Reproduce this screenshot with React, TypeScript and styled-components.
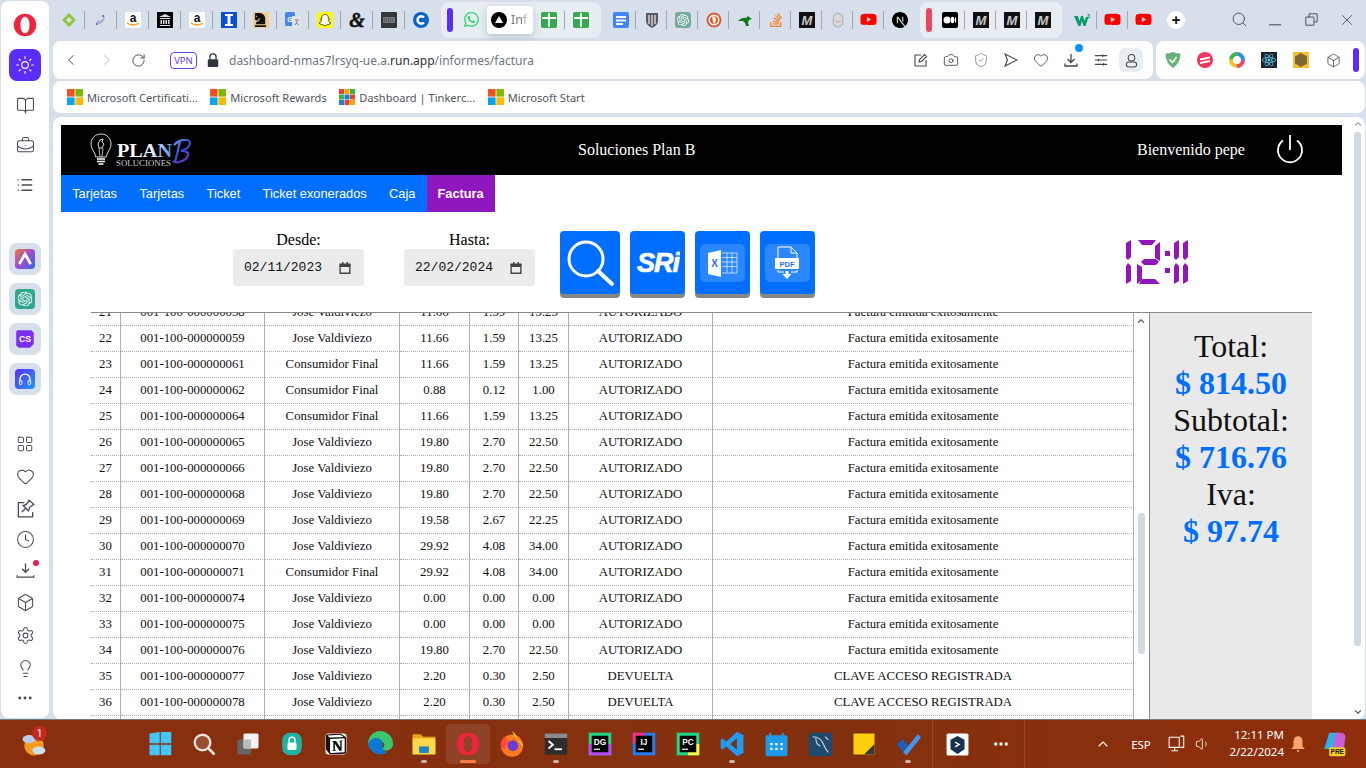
import React from "react"
import styled, { createGlobalStyle } from "styled-components"
import {
    BookOpen,
    BriefcaseBusiness,
    Box,
    Camera,
    ChevronDown,
    ChevronLeft,
    ChevronRight,
    ChevronUp,
    Clock,
    Ellipsis,
    Heart,
    LayoutGrid,
    Lightbulb,
    List,
    RotateCw,
    Search,
    Settings,
    ShieldCheck,
    Sun,
    Volume1,
    X,
} from "lucide-react"
import { FaChessKnight, FaReact, FaSnapchatGhost, FaStackOverflow, FaWhatsapp, FaYoutube } from "react-icons/fa"
import { SiNextdotjs, SiNotion, SiOpenai } from "react-icons/si"

const GlobalStyle = createGlobalStyle`
    html, body {
        margin: 0;
        padding: 0;
        overflow: hidden;
    }
    * {
        box-sizing: border-box;
    }
    svg {
        display: block;
    }
`

const Screen = styled.div`
    width: 1366px;
    height: 768px;
    display: flex;
    flex-direction: column;
    overflow: hidden;
    background: #d7e0ea;
    font-family: "Noto Sans", sans-serif;
`

const Upper = styled.div`
    height: 719px;
    display: flex;
`

const Sidebar = styled.aside`
    width: 48px;
    margin: 1px 4px 1px 1px;
    background: #fff;
    border-radius: 8px;
    display: flex;
    flex-direction: column;
    align-items: center;
    color: #474c54;
`

const SideLogo = styled.div`
    height: 48px;
    display: flex;
    align-items: center;
`

const ActiveTile = styled.div`
    width: 32px;
    height: 32px;
    margin-bottom: 4px;
    border-radius: 8px;
    background: #5a2dfa;
    color: #fff;
    display: flex;
    align-items: center;
    justify-content: center;
`

const SideIcon = styled.div<{ $h: number }>`
    height: ${(p) => p.$h}px;
    width: 32px;
    display: flex;
    align-items: center;
    justify-content: center;
    position: relative;
`

const SideApps = styled.div`
    margin: 38px 0 33px;
    display: flex;
    flex-direction: column;
    gap: 8px;
`

const AppTile = styled.div`
    width: 32px;
    height: 32px;
    border-radius: 8px;
    background: #d7e0ea;
    display: flex;
    align-items: center;
    justify-content: center;
`

const RedDot = styled.span`
    position: absolute;
    top: 5px;
    right: 2px;
    width: 6px;
    height: 6px;
    border-radius: 50%;
    background: #f5164d;
`

const Main = styled.main`
    flex: 1;
    min-width: 0;
    display: flex;
    flex-direction: column;
    margin-right: 1px;
`

const TabStrip = styled.div`
    height: 37px;
    margin: 1px 0 3px;
    display: flex;
    align-items: center;
    gap: 4px;
`

const TabRun = styled.div`
    display: flex;
    align-items: center;
`

const TabGroup = styled.div<{ $ml?: number }>`
    height: 36px;
    margin-left: ${(p) => p.$ml ?? 0}px;
    padding: 0 4px 0 6px;
    border-radius: 8px;
    background: #e8edf3;
    display: flex;
    align-items: center;
`

const Pill = styled.span<{ $color: string }>`
    width: 6px;
    height: 24px;
    margin-right: 2px;
    border-radius: 3px;
    background: ${(p) => p.$color};
`

const Slot = styled.div<{ $w: number; $sep?: boolean }>`
    position: relative;
    width: ${(p) => p.$w}px;
    height: 20px;
    display: flex;
    align-items: center;
    justify-content: center;
    ${(p) =>
        p.$sep &&
        `&::after {
            content: "";
            position: absolute;
            right: 0;
            top: 1px;
            height: 18px;
            width: 1px;
            background: #a3a9b0;
        }`}
`

const ActiveTab = styled.div`
    width: 46px;
    height: 28px;
    padding-left: 4px;
    border-radius: 4px;
    background: #fff;
    box-shadow: 0 3px 8px rgba(60, 80, 110, 0.25);
    display: flex;
    align-items: center;
    gap: 4px;
    overflow: hidden;
    font-size: 12.5px;
    color: #777;
`

const TabLabel = styled.span`
    width: 18px;
    overflow: hidden;
    white-space: nowrap;
    mask-image: linear-gradient(90deg, #000 60%, transparent);
`

const PlusButton = styled.div`
    width: 18px;
    height: 18px;
    margin-left: 8px;
    border-radius: 50%;
    background: #fff;
    display: flex;
    align-items: center;
    justify-content: center;
    color: #111;
    font-size: 16px;
    font-weight: 700;
`

const WindowControls = styled.div`
    margin-left: auto;
    display: flex;
    color: #4a4f55;
`

const WindowButton = styled.div`
    width: 36px;
    height: 20px;
    display: flex;
    align-items: center;
    justify-content: center;
`

const ToolRow = styled.div`
    height: 38px;
    display: flex;
    gap: 3px;
`

const AddressBar = styled.div`
    width: 1100px;
    border-radius: 8px;
    background: #fff;
    display: flex;
    align-items: center;
`

const NavBtn = styled.div<{ $w: number; $muted?: boolean }>`
    width: ${(p) => p.$w}px;
    display: flex;
    justify-content: center;
    color: ${(p) => (p.$muted ? "#aab0b8" : "#3f444b")};
`

const VpnBadge = styled.div`
    width: 27px;
    height: 17px;
    margin-left: 20px;
    border: 1px solid #6b3ff6;
    border-radius: 4px;
    color: #6b3ff6;
    font-size: 9.5px;
    line-height: 15px;
    text-align: center;
`

const LockWrap = styled.div`
    width: 32px;
    display: flex;
    justify-content: center;
`

const Url = styled.div`
    font-size: 12px;
    color: #6c7783;
    white-space: nowrap;
    span {
        color: #2c3238;
    }
`

const AddressTools = styled.div`
    margin-left: auto;
    margin-right: 10px;
    display: flex;
    align-items: center;
    color: #42474e;
`

const ToolIcon = styled.div`
    position: relative;
    width: 30px;
    display: flex;
    justify-content: center;
`

const BlueDot = styled.span`
    position: absolute;
    top: -8px;
    right: 3px;
    width: 8px;
    height: 8px;
    border-radius: 50%;
    background: #0a93ff;
`

const AvatarTile = styled.div`
    width: 24px;
    height: 24px;
    margin-left: 3px;
    border-radius: 6px;
    background: #e8edf2;
    display: flex;
    align-items: center;
    justify-content: center;
`

const ExtensionBar = styled.div`
    flex: 1;
    padding-left: 1px;
    border-radius: 8px;
    background: #fff;
    display: flex;
    align-items: center;
`

const ExtSlot = styled.div`
    width: 32px;
    display: flex;
    justify-content: center;
    color: #42474e;
`

const ExtPill = styled.span`
    width: 6px;
    height: 24px;
    margin-left: 4px;
    border-radius: 3px;
    background: #5a2dfa;
`

const BookmarkBar = styled.div`
    height: 32px;
    margin-top: 2px;
    padding-left: 14px;
    border-radius: 8px;
    background: #fff;
    display: flex;
    align-items: center;
    gap: 12.5px;
`

const Bookmark = styled.div`
    display: flex;
    align-items: center;
    gap: 4px;
    font-size: 11.1px;
    color: #4f565e;
    white-space: nowrap;
`

const PagePanel = styled.div`
    flex: 1;
    min-height: 0;
    margin-top: 4px;
    border-radius: 8px;
    background: #fff;
    display: flex;
    overflow: hidden;
`

const Page = styled.div`
    flex: 1;
    min-width: 0;
    padding: 8px 8px 0;
    display: flex;
    flex-direction: column;
    font-family: "Liberation Serif", serif;
`

const PageScroll = styled.div`
    width: 15px;
    height: 100%;
    padding: 2px 0;
    display: flex;
    flex-direction: column;
    align-items: center;
    color: #666;
`

const PageThumb = styled.div`
    width: 7px;
    height: 514px;
    margin-top: 3px;
    margin-bottom: auto;
    border-radius: 3px;
    background: #d0dbe4;
`

const Header = styled.header`
    height: 50px;
    background: #000;
    color: #fff;
    display: flex;
    align-items: center;
    font-size: 16px;
`

const LogoWrap = styled.div`
    width: 517px;
    padding-left: 29px;
`

const HeaderTitle = styled.div`
    width: 559px;
`

const HeaderUser = styled.div`
    width: 138px;
`

const NavBar = styled.nav`
    width: 434px;
    height: 37px;
    background: #006fff;
    display: flex;
    font-family: "Liberation Sans", sans-serif;
    font-size: 12.8px;
`

const NavItem = styled.div`
    padding: 0 11.2px;
    color: #fff;
    line-height: 37px;
    white-space: nowrap;
`

const NavItemActive = styled(NavItem)`
    flex: 0 0 68px;
    padding: 0;
    background: #8f17bd;
    font-weight: 700;
    text-align: center;
`

const Controls = styled.div`
    height: 100px;
    padding: 19px 0 0 172px;
    display: flex;
    align-items: flex-start;
`

const Field = styled.div`
    width: 131px;
    margin-right: 40px;
    text-align: center;
    font-size: 16px;
    line-height: 18px;
`

const DateBox = styled.div`
    height: 37px;
    padding: 0 13px 0 11px;
    border-radius: 4px;
    background: #ebebeb;
    display: flex;
    align-items: center;
    justify-content: space-between;
    font-family: "Liberation Mono", monospace;
    font-size: 13px;
    color: #111;
`

const ActionButtons = styled.div`
    margin-left: -15px;
    display: flex;
    gap: 10px;
`

const ActionButton = styled.div<{ $w: number }>`
    width: ${(p) => p.$w}px;
    height: 63px;
    border-radius: 4px;
    background: #006fff;
    box-shadow: 0 4px 0 #868686;
    display: flex;
    align-items: center;
    justify-content: center;
`

const ClockWrap = styled.div`
    margin: 9px 0 0 310px;
`

const DataPanel = styled.section`
    flex: 1;
    min-height: 0;
    margin: 0 30px;
    border-top: 1px solid #888;
    display: flex;
`

const TableClip = styled.div`
    width: 1043px;
    overflow: hidden;
`

const Table = styled.table`
    width: 1043px;
    margin-top: -13px;
    table-layout: fixed;
    border-collapse: separate;
    border-spacing: 0;
    font-size: 12.8px;
    color: #111;
`

const Cell = styled.td`
    height: 26px;
    padding: 0;
    text-align: center;
    white-space: nowrap;
    border-right: 1px solid #b0b0b0;
    border-bottom: 1px dotted #aaa;
`

const TableScroll = styled.div`
    width: 16px;
    padding: 3px 1px 0 0;
    border-right: 1px solid #888;
    display: flex;
    flex-direction: column;
    align-items: center;
    color: #666;
`

const TableThumb = styled.div`
    width: 7px;
    height: 141px;
    margin-top: 187px;
    border-radius: 3px;
    background: #d0dbe4;
`

const Totals = styled.aside`
    flex: 1;
    padding-top: 15px;
    background: #e9e9e9;
    text-align: center;
    font-size: 32px;
    color: #111;
`

const TotalValue = styled.div`
    font-weight: 700;
    color: #006fff;
`

const Taskbar = styled.footer`
    height: 49px;
    border-top: 1px solid #6f7b7d;
    background: linear-gradient(90deg, #8a2f0e, #83300f 60%, #8e2e0b);
    display: flex;
    align-items: center;
    color: #fff;
`

const Weather = styled.div`
    position: relative;
    width: 138px;
    padding-left: 21px;
`

const WeatherBadge = styled.span`
    position: absolute;
    top: -5px;
    left: 32px;
    width: 15px;
    height: 15px;
    border-radius: 50%;
    background: #c42b1c;
    font-size: 10px;
    line-height: 15px;
    text-align: center;
`

const TaskSlot = styled.div<{ $dot?: boolean; $active?: boolean }>`
    position: relative;
    width: 44px;
    height: 40px;
    border-radius: 4px;
    display: flex;
    align-items: center;
    justify-content: center;
    background: ${(p) => (p.$active ? "rgba(255,255,255,0.09)" : "transparent")};
    ${(p) =>
        (p.$dot || p.$active) &&
        `&::after {
            content: "";
            position: absolute;
            bottom: 1px;
            left: 50%;
            transform: translateX(-50%);
            height: 3px;
            border-radius: 2px;
            width: ${p.$active ? 16 : 6}px;
            background: ${p.$active ? "#ff7a3d" : "#c9b3a8"};
        }`}
`

const TaskDivider = styled.div<{ $gap: number }>`
    width: 1px;
    height: 48px;
    margin: 0 ${(p) => p.$gap}px;
    background: rgba(255, 255, 255, 0.12);
`

const Tray = styled.div`
    margin-left: auto;
    padding-right: 18px;
    display: flex;
    align-items: center;
    font-size: 11.5px;
`

const TrayItem = styled.div<{ $w: number; $ml: number }>`
    width: ${(p) => p.$w}px;
    margin-left: ${(p) => p.$ml}px;
    display: flex;
    justify-content: center;
`

const ClockText = styled.div`
    width: 64px;
    margin-left: 7px;
    padding-bottom: 2px;
    text-align: right;
    line-height: 17px;
    white-space: nowrap;
`

const Svg: React.FC<{ s?: number; v?: string; children: React.ReactNode }> = ({ s = 16, v = "0 0 16 16", children }) => (
    <svg width={s} height={s} viewBox={v}>
        {children}
    </svg>
)

const MediumM = () => (
    <Svg>
        <rect width="16" height="16" fill="#111" />
        <text x="8" y="13" textAnchor="middle" fontFamily="Liberation Sans" fontStyle="italic" fontWeight="700" fontSize="13" fill="#c8c8c8">
            M
        </text>
    </Svg>
)

const AmazonIcon = () => (
    <Svg>
        <rect width="16" height="16" rx="2" fill="#fff" />
        <text x="8" y="10" textAnchor="middle" fontFamily="Liberation Sans" fontWeight="700" fontSize="12" fill="#111">
            a
        </text>
        <path d="M2 11q6 4 12 0" fill="none" stroke="#f90" strokeWidth="1.5" />
    </Svg>
)

const SheetIcon = () => (
    <Svg>
        <rect width="16" height="16" rx="2" fill="#34a853" />
        <path d="M1 6h14M8 1v14" stroke="#fff" strokeWidth="1.800" fill="none" />
    </Svg>
)

const YoutubeIcon = () => <FaYoutube size={17} color="#f00" />

const CalendarIcon = () => (
    <Svg s={12}>
        <path d="M1.500 3h13v12h-13z" fill="none" stroke="#444" strokeWidth="1.800" />
        <path d="M1 2.500h14v4H1zM4 0h2v3H4zM10 0h2v3h-2z" fill="#444" />
    </Svg>
)

const ExcelGlyph = () => (
    <svg width="45" height="38" viewBox="0 0 45 38">
        <rect width="45" height="38" rx="5" fill="#fff" fillOpacity="0.17" />
        <path d="M8 9l13-3v27l-13-3z" fill="#fff" />
        <text x="14.5" y="23" textAnchor="middle" fontFamily="Liberation Sans" fontWeight="700" fontSize="10" fill="#2f6fed">
            X
        </text>
        <path d="M22 9h15v20H22M22 13.500h15M22 18h15M22 22.500h15M27 9v20M32 9v20" fill="none" stroke="#fff" strokeOpacity="0.8" strokeWidth="0.800" />
    </svg>
)

const PdfGlyph = () => (
    <svg width="45" height="38" viewBox="0 0 45 38">
        <rect width="45" height="38" rx="5" fill="#fff" fillOpacity="0.17" />
        <path d="M13 14V3h13l6 6v5M13 26v2h6M32 26v2h-6M26 3v6h6" fill="none" stroke="#fff" strokeWidth="1" />
        <rect x="10" y="14" width="24" height="11" rx="1" fill="#fff" />
        <text x="22" y="22.500" textAnchor="middle" fontFamily="Liberation Sans" fontWeight="700" fontSize="7.500" fill="#2f6fed">
            PDF
        </text>
        <path d="M20.500 27h3v3h3l-4.500 5-4.500-5h3z" fill="#fff" />
    </svg>
)

const upperSeg = (x: number) => `${x},3 ${x + 5},0 ${x + 5},17 ${x + 2},20 ${x},18`
const lowerSeg = (x: number) => `${x},26 ${x + 2},23 ${x + 5},26 ${x + 5},41 ${x},44`

const SegmentClock = () => (
    <svg width="64" height="45" viewBox="0 0 64 45" fill="#8f17bd">
        <polygon points={upperSeg(1)} />
        <polygon points={lowerSeg(1)} />
        <polygon points="13,0 31,0 27,5 17,5" />
        <polygon points="35,2 35,21 30,18 30,6" />
        <polygon points="16,22 19,19 31,19 34,22 31,25 19,25" />
        <polygon points="12,24 17,27 17,40 12,44" />
        <polygon points="17,39 30,39 35,44 14,44" />
        <rect x="40" y="11" width="5" height="5" />
        <rect x="40" y="28" width="5" height="5" />
        <polygon points={upperSeg(49)} />
        <polygon points={lowerSeg(49)} />
        <polygon points={upperSeg(58)} />
        <polygon points={lowerSeg(58)} />
    </svg>
)

const PlanLogo = () => (
    <svg width="104" height="34" viewBox="0 0 104 34">
        <defs>
            <linearGradient id="planFade" x1="0" x2="1">
                <stop offset="0.55" stopColor="#fff" />
                <stop offset="1" stopColor="#5f8fe8" />
            </linearGradient>
            <linearGradient id="bFade" gradientUnits="userSpaceOnUse" x1="82" y1="8" x2="102" y2="24">
                <stop offset="0" stopColor="#6fa8f0" />
                <stop offset="0.5" stopColor="#2f4fd8" />
                <stop offset="1" stopColor="#8a25c9" />
            </linearGradient>
        </defs>
        <path
            d="M11 1C5 1 1 5.500 1 11c0 4 2 6 3.500 9 .7 1.500 1 3 1.200 4h10.600c.2-1 .5-2.500 1.200-4C19 17 21 15 21 11 21 5.500 17 1 11 1z"
            fill="none"
            stroke="#ddd"
            strokeWidth="1"
        />
        <path d="M7 26h8M7 28.500h8M8.500 31h5" stroke="#fff" strokeWidth="1.600" />
        <path d="M10 7l3-1-1 3 2 2-2 4h-3l-1-4z" fill="none" stroke="#ddd" strokeWidth="1" />
        <path d="M9 15l1 9M13 15l-1 9" stroke="#ddd" strokeWidth="0.800" />
        <text x="27" y="24" textLength={55} lengthAdjust="spacingAndGlyphs" fontFamily="Liberation Serif" fontWeight="700" fontSize="18" fill="url(#planFade)">
            PLAN
        </text>
        <text x="26" y="33" textLength={55} lengthAdjust="spacingAndGlyphs" fontFamily="Liberation Serif" fontSize="8.500" fill="#ccc">
            SOLUCIONES
        </text>
        <path
            d="M84 12q6-6 13-5 5 1 2 6-2 3-8 5 8 0 7 4-1 5-9 7-4 1-6-1M90 8q-2 10-5 21"
            fill="none"
            stroke="url(#bFade)"
            strokeWidth="2.200"
        />
    </svg>
)

const tabsLeft: React.ReactNode[] = [
    <Svg key="e">
        <path d="M8 1l7 7-7 7-7-7z M8 5l-3 3 3 3 3-3z" fill="#8cc63f" fillRule="evenodd" />
    </Svg>,
    <Svg key="rb">
        <path d="M3 11l2-3 3 1 3-5 1 2-2 4-3 2z" fill="#a9b2c8" />
        <circle cx="10" cy="4" r="1" fill="#5b5fb5" />
        <circle cx="4" cy="12" r="1" fill="#5b5fb5" />
    </Svg>,
    <AmazonIcon key="a1" />,
    <Svg key="mus">
        <rect width="16" height="16" fill="#000" />
        <path d="M2 5l6-3 6 3zM3 6h10v1H3zM3.500 8h1.500v4H3.500zM6 8h1.500v4H6zM8.500 8H10v4H8.500zM11 8h1.500v4H11zM3 13h10v1H3z" fill="#ddd" />
    </Svg>,
    <AmazonIcon key="a2" />,
    <Svg key="i">
        <rect width="16" height="16" fill="#0b50d6" />
        <path d="M4 2h8v2h-2.500v8H12v2H4v-2h2.500V4H4z" fill="#fff" />
    </Svg>,
    <Svg key="k">
        <rect width="16" height="16" fill="#f0cd91" />
        <foreignObject width="16" height="16">
            <FaChessKnight size={15} color="#111" />
        </foreignObject>
    </Svg>,
    <Svg key="gt">
        <rect width="10" height="14" rx="1.500" fill="#4a86e8" />
        <rect x="7" y="4" width="9" height="12" rx="1" fill="#dfe3e8" />
        <text x="5" y="9.500" textAnchor="middle" fontFamily="Liberation Sans" fontWeight="700" fontSize="7" fill="#fff">
            G
        </text>
        <path d="M10 8h4M12 8q0 3-2 5M11 10q1 2 3 3" stroke="#778" strokeWidth="0.800" fill="none" />
    </Svg>,
    <Svg key="sn">
        <rect width="16" height="16" rx="3" fill="#fffc00" />
        <foreignObject x="2" y="2" width="12" height="12">
            <FaSnapchatGhost size={12} color="#fff" stroke="#111" strokeWidth={30} />
        </foreignObject>
    </Svg>,
    <Svg key="amp">
        <text x="8" y="14.500" textAnchor="middle" fontFamily="Liberation Serif" fontStyle="italic" fontWeight="700" fontSize="20" fill="#111" stroke="#111" strokeWidth="0.500">
            &amp;
        </text>
    </Svg>,
    <Svg key="kb">
        <rect width="16" height="16" rx="1" fill="#343638" />
        <rect x="2" y="5" width="12" height="6" fill="#777" />
        <path d="M3 7h10M3 9h10" stroke="#333" strokeWidth="0.700" strokeDasharray="1 1" />
    </Svg>,
    <Svg key="c">
        <circle cx="8" cy="8" r="8" fill="#0b63ce" />
        <path d="M11 5.500a3.700 3.700 0 1 0 0 5" fill="none" stroke="#fff" strokeWidth="2.400" />
    </Svg>,
]

const tabsMiddle: React.ReactNode[] = [
    <Svg key="docs">
        <rect width="16" height="16" rx="2" fill="#4285f4" />
        <path d="M3 4h10v2H3zM3 7.500h10v2H3zM3 11h7v2H3z" fill="#fff" />
    </Svg>,
    <Svg key="sh">
        <path d="M2 1h12v8q0 4-6 7-6-3-6-7z" fill="#5b5b5f" />
        <path d="M5 3v9M8 3v11M11 3v9" stroke="#e5e5e5" strokeWidth="1.300" />
    </Svg>,
    <Svg key="gpt">
        <rect width="16" height="16" rx="3" fill="#74aa9c" />
        <foreignObject x="2" y="2" width="12" height="12">
            <SiOpenai size={12} color="#fff" />
        </foreignObject>
    </Svg>,
    <Svg key="ddg">
        <circle cx="8" cy="8" r="7.500" fill="#de5833" />
        <circle cx="8" cy="8" r="5.500" fill="#fff" />
        <circle cx="8" cy="8" r="4" fill="#de5833" />
        <path d="M6 4.500h3l1 3-1 4H7.500z" fill="#fff" />
        <path d="M7.500 8.500h3l-1 1.500z" fill="#f2c300" />
    </Svg>,
    <Svg key="roo">
        <path d="M1 9q4-4 8-3l2-2 1 1 3 2-3 1-1 3 1 3H9l-1-3-2-2q-2 0-5 0z" fill="#0b7d16" />
    </Svg>,
    <FaStackOverflow key="so" size={16} color="#f48024" />,
    <MediumM key="m" />,
    <Svg key="egg">
        <path d="M8 1q5 0 5 8 0 6-5 6t-5-6q0-8 5-8z" fill="#d8d8d8" stroke="#999" strokeWidth="0.700" />
        <path d="M5 9q3 2 6 0" stroke="#e07a5f" strokeWidth="0.600" fill="none" />
    </Svg>,
    <YoutubeIcon key="yt" />,
    <SiNextdotjs key="nx" size={16} color="#000" />,
]

const sideApps: React.ReactNode[] = [
    <Svg key="a" s={20}>
        <defs>
            <linearGradient id="arcGrad" x1="0" y1="0" x2="1" y2="1">
                <stop offset="0" stopColor="#f47b34" />
                <stop offset="0.5" stopColor="#9c4bd0" />
                <stop offset="1" stopColor="#2f6fe0" />
            </linearGradient>
        </defs>
        <rect width="16" height="16" rx="3" fill="url(#arcGrad)" />
        <path d="M3.500 12L8 4l4.500 8" fill="none" stroke="#fff" strokeWidth="2.200" />
    </Svg>,
    <Svg key="g" s={20}>
        <rect width="16" height="16" rx="3" fill="#2fa98c" />
        <foreignObject x="2" y="2" width="12" height="12">
            <SiOpenai size={12} color="#fff" />
        </foreignObject>
    </Svg>,
    <Svg key="c" s={20}>
        <path d="M2 1h11l2 2v9l-3 3H3l-2-2V2z" fill="#7a2ff0" />
        <text x="8" y="10.500" textAnchor="middle" fontFamily="Liberation Sans" fontWeight="700" fontSize="7" fill="#fff">
            CS
        </text>
    </Svg>,
    <Svg key="h" s={20}>
        <defs>
            <linearGradient id="hpGrad" x1="0" y1="0" x2="1" y2="1">
                <stop offset="0" stopColor="#5a2dfa" />
                <stop offset="1" stopColor="#1f9bf0" />
            </linearGradient>
        </defs>
        <rect width="16" height="16" rx="3" fill="url(#hpGrad)" />
        <path d="M4 10V8a4 4 0 0 1 8 0v2" fill="none" stroke="#fff" strokeWidth="1" />
        <rect x="3.500" y="9" width="2" height="3.500" rx="1" fill="none" stroke="#fff" strokeWidth="0.800" />
        <rect x="10.500" y="9" width="2" height="3.500" rx="1" fill="none" stroke="#fff" strokeWidth="0.800" />
    </Svg>,
]

const taskIcons: { icon: React.ReactNode; dot?: boolean; active?: boolean }[] = [
    {
        icon: (
            <Svg s={24}>
                <path d="M1 1l6.800-1v7.500H1zM8.500 0H15.500v7.500h-7zM1 8.500h6.800V15.500H1zM8.500 8.500h7V15.500h-7z" fill="#45c6f5" />
            </Svg>
        ),
    },
    {
        icon: (
            <Svg s={24}>
                <circle cx="7" cy="7" r="5.200" fill="rgba(255,255,255,0.15)" stroke="#e9e4e0" strokeWidth="1.600" />
                <path d="M11 11l4 4" stroke="#e9e4e0" strokeWidth="1.800" />
            </Svg>
        ),
    },
    {
        icon: (
            <Svg s={24}>
                <rect x="1" y="5" width="9" height="10" rx="1" fill="#666" />
                <rect x="5" y="1" width="10" height="10" rx="1" fill="#f3f3f3" />
                <rect x="5" y="5" width="5" height="6" fill="#bbb" />
            </Svg>
        ),
    },
    {
        icon: (
            <Svg s={24}>
                <rect x="1.500" y="0.500" width="13" height="15" rx="5" fill="#1fb3a3" />
                <rect x="5" y="7" width="6" height="5" rx="1" fill="#fff" />
                <path d="M6 7V5.500a2 2 0 0 1 4 0V7" fill="none" stroke="#fff" strokeWidth="1" />
            </Svg>
        ),
    },
    {
        icon: (
            <Svg s={24}>
                <rect x="1" y="1" width="14" height="14" rx="2" fill="#fff" />
                <foreignObject x="1" y="1" width="14" height="14">
                    <SiNotion size={14} color="#111" />
                </foreignObject>
            </Svg>
        ),
    },
    {
        icon: (
            <Svg s={26}>
                <path d="M8 0a8 8 0 0 1 8 8c0 2.500-2 4-4 4-2 0-3-1-3-1 2-1 2-3 1-4-2-2-7-2-9.500 1C1 3 4 0 8 0z" fill="#39c66d" />
                <path d="M.5 8C2 4 7 3 9 6c1.500 2-.5 5 2 6.500 1 .5 2 .3 2 .3A8 8 0 0 1 .5 8z" fill="#0b78d4" />
            </Svg>
        ),
    },
    {
        icon: (
            <Svg s={26}>
                <path d="M1 2h5l1.500 1.500H15V14H1z" fill="#e8a416" />
                <rect x="1" y="4.500" width="14" height="10" fill="#ffd84a" />
                <rect x="5" y="9.500" width="6" height="4" fill="#1a86c8" />
            </Svg>
        ),
        dot: true,
    },
    {
        icon: (
            <Svg s={24}>
                <path d="M8 .5a7.500 7.500 0 1 0 0 15 7.500 7.500 0 0 0 0-15zm0 2c2 0 3 2.500 3 5.500s-1 5.500-3 5.500S5 11 5 8s1-5.500 3-5.500z" fill="#f0243c" fillRule="evenodd" />
            </Svg>
        ),
        active: true,
    },
    {
        icon: (
            <Svg s={26}>
                <circle cx="8" cy="9" r="6.800" fill="#ff7a1f" />
                <path d="M8 0q3 2 3 5 4 2 4 5L10 4z" fill="#ffc61c" />
                <circle cx="8.500" cy="9" r="3.300" fill="#6c3bcf" />
                <path d="M1 9q0-4 3-6 0 2 2 3L3 12z" fill="#ff4a3a" />
            </Svg>
        ),
    },
    {
        icon: (
            <Svg s={24}>
                <rect x="0.500" y="1" width="15" height="14" rx="1" fill="#2d2d2d" />
                <rect x="0.500" y="1" width="15" height="3" fill="#8a8a8a" />
                <path d="M3 6l3 2.500L3 11" fill="none" stroke="#fff" strokeWidth="1.200" />
                <path d="M7 11.500h5" stroke="#fff" strokeWidth="1.200" />
            </Svg>
        ),
        dot: true,
    },
    {
        icon: (
            <Svg s={24}>
                <rect x="0.500" y="0.500" width="15" height="15" fill="#21d789" />
                <rect x="0.500" y="8" width="15" height="7.500" fill="#b74af7" />
                <rect x="2.500" y="2.500" width="11" height="11" fill="#000" />
                <text x="8" y="8.500" textAnchor="middle" fontFamily="Liberation Sans" fontWeight="700" fontSize="5.500" fill="#fff">
                    DG
                </text>
                <path d="M4 11.500h4" stroke="#fff" strokeWidth="0.800" />
            </Svg>
        ),
    },
    {
        icon: (
            <Svg s={24}>
                <rect x="0.500" y="0.500" width="15" height="15" fill="#1f7cf0" />
                <rect x="0.500" y="0.500" width="8" height="7" fill="#f5317f" />
                <rect x="2.500" y="2.500" width="11" height="11" fill="#000" />
                <text x="8" y="8.500" textAnchor="middle" fontFamily="Liberation Sans" fontWeight="700" fontSize="5.500" fill="#fff">
                    IJ
                </text>
                <path d="M4 11.500h4" stroke="#fff" strokeWidth="0.800" />
            </Svg>
        ),
    },
    {
        icon: (
            <Svg s={24}>
                <rect x="0.500" y="0.500" width="15" height="15" fill="#21d789" />
                <rect x="8" y="8" width="7.500" height="7.500" fill="#fcf84a" />
                <rect x="2.500" y="2.500" width="11" height="11" fill="#000" />
                <text x="8" y="8.500" textAnchor="middle" fontFamily="Liberation Sans" fontWeight="700" fontSize="5.500" fill="#fff">
                    PC
                </text>
                <path d="M4 11.500h4" stroke="#fff" strokeWidth="0.800" />
            </Svg>
        ),
    },
    {
        icon: (
            <Svg s={26}>
                <path d="M11 .5l4 2v11l-4 2L4.500 9.500 2 11.500l-1-1V5.500l1-1 2.500 2zM11 4.500L7 8l4 3.500z" fill="#1f9cf0" fillRule="evenodd" />
            </Svg>
        ),
        dot: true,
    },
    {
        icon: (
            <Svg s={25}>
                <rect x="1" y="2" width="14" height="13.500" rx="1" fill="#1c9be6" />
                <path d="M4 .5v3M12 .5v3" stroke="#1c9be6" strokeWidth="1.200" />
                <path d="M4 7h1.500v1.500H4zM7.200 7h1.500v1.500H7.200zM10.500 7H12v1.500h-1.500zM4 10h1.500v1.500H4zM7.200 10h1.500v1.500H7.200zM10.500 10H12v1.500h-1.500z" fill="#fff" />
            </Svg>
        ),
    },
    {
        icon: (
            <Svg s={25}>
                <rect x="0.500" y="0.500" width="15" height="15" rx="2" fill="#1e4a6e" />
                <path d="M3 3q5 0 7 5 1 3 3 5M5 4q0 4 3 5M11 3l2 2" fill="none" stroke="#cfd8df" strokeWidth="0.700" />
            </Svg>
        ),
    },
    {
        icon: (
            <Svg s={24}>
                <path d="M1 1h14v14H1z" fill="#ffcf0f" />
                <path d="M15 8v7H8z" fill="#3a3a3a" />
            </Svg>
        ),
    },
    {
        icon: (
            <Svg s={26}>
                <path d="M1 8l4-3 3 4-3 4z" fill="#1d5fb8" />
                <path d="M5 13L14 2l2 2-9 11z" fill="#3f97ee" />
            </Svg>
        ),
        dot: true,
    },
]

type Invoice = [number, string, string, string, string, string, string, string]

const OK = "Factura emitida exitosamente"
const KEY = "CLAVE ACCESO REGISTRADA"
const JV = "Jose Valdiviezo"
const CF = "Consumidor Final"

const invoices: Invoice[] = [
    [21, "058", JV, "11.66", "1.59", "13.25", "AUTORIZADO", OK],
    [22, "059", JV, "11.66", "1.59", "13.25", "AUTORIZADO", OK],
    [23, "061", CF, "11.66", "1.59", "13.25", "AUTORIZADO", OK],
    [24, "062", CF, "0.88", "0.12", "1.00", "AUTORIZADO", OK],
    [25, "064", CF, "11.66", "1.59", "13.25", "AUTORIZADO", OK],
    [26, "065", JV, "19.80", "2.70", "22.50", "AUTORIZADO", OK],
    [27, "066", JV, "19.80", "2.70", "22.50", "AUTORIZADO", OK],
    [28, "068", JV, "19.80", "2.70", "22.50", "AUTORIZADO", OK],
    [29, "069", JV, "19.58", "2.67", "22.25", "AUTORIZADO", OK],
    [30, "070", JV, "29.92", "4.08", "34.00", "AUTORIZADO", OK],
    [31, "071", CF, "29.92", "4.08", "34.00", "AUTORIZADO", OK],
    [32, "074", JV, "0.00", "0.00", "0.00", "AUTORIZADO", OK],
    [33, "075", JV, "0.00", "0.00", "0.00", "AUTORIZADO", OK],
    [34, "076", JV, "19.80", "2.70", "22.50", "AUTORIZADO", OK],
    [35, "077", JV, "2.20", "0.30", "2.50", "DEVUELTA", KEY],
    [36, "078", JV, "2.20", "0.30", "2.50", "DEVUELTA", KEY],
    [37, "079", JV, "2.20", "0.30", "2.50", "DEVUELTA", KEY],
]

const columnWidths = [30, 144, 135, 70, 49, 50, 144, 421]

const MsLogo = () => (
    <Svg>
        <path d="M0 0h7.600v7.600H0z" fill="#f25022" />
        <path d="M8.400 0H16v7.600H8.400z" fill="#7fba00" />
        <path d="M0 8.400h7.600V16H0z" fill="#00a4ef" />
        <path d="M8.400 8.400H16V16H8.400z" fill="#ffb900" />
    </Svg>
)

const TinkerLogo = () => (
    <Svg>
        <path d="M0 0h5v5H0z" fill="#e8402a" />
        <path d="M5.500 0h5v5h-5z" fill="#f7a600" />
        <path d="M11 0h5v5h-5z" fill="#3cb34a" />
        <path d="M0 5.500h5v5H0z" fill="#3cb34a" />
        <path d="M5.500 5.500h5v5h-5z" fill="#1c7ed6" />
        <path d="M11 5.500h5v5h-5z" fill="#e8402a" />
        <path d="M0 11h5v5H0z" fill="#1c7ed6" />
        <path d="M5.500 11h5v5h-5z" fill="#e8402a" />
        <path d="M11 11h5v5h-5z" fill="#f7a600" />
    </Svg>
)

export default function App() {
    return (
        <Screen>
            <GlobalStyle />
            <Upper>
                <Sidebar>
                    <SideLogo>
                        <Svg s={24}>
                            <path d="M8 .5a7.500 7.500 0 1 0 0 15 7.500 7.500 0 0 0 0-15zm0 2c2 0 3 2.500 3 5.500s-1 5.500-3 5.500S5 11 5 8s1-5.500 3-5.500z" fill="#f0243c" fillRule="evenodd" />
                        </Svg>
                    </SideLogo>
                    <ActiveTile>
                        <Sun size={20} strokeWidth={1.4} />
                    </ActiveTile>
                    <SideIcon $h={40}>
                        <BookOpen size={19} strokeWidth={1.3} />
                    </SideIcon>
                    <SideIcon $h={40}>
                        <BriefcaseBusiness size={19} strokeWidth={1.3} />
                    </SideIcon>
                    <SideIcon $h={40}>
                        <List size={18} strokeWidth={1.8} />
                    </SideIcon>
                    <SideApps>
                        {sideApps.map((app, i) => (
                            <AppTile key={i}>{app}</AppTile>
                        ))}
                    </SideApps>
                    <SideIcon $h={32}>
                        <LayoutGrid size={18} strokeWidth={1.3} />
                    </SideIcon>
                    <SideIcon $h={32}>
                        <Heart size={19} strokeWidth={1.3} />
                    </SideIcon>
                    <SideIcon $h={32}>
                        <Svg s={19}>
                            <path d="M7 3H2v12h12v-4M5 11l3-3M6 5.500L10.500 10l1-3L15 4.500 11 1 8.800 4.500z" fill="none" stroke="currentColor" strokeWidth="1.100" />
                        </Svg>
                    </SideIcon>
                    <SideIcon $h={31}>
                        <Clock size={19} strokeWidth={1.3} />
                    </SideIcon>
                    <SideIcon $h={31}>
                        <Svg s={19}>
                            <path d="M8 2v7M5 6.500L8 9.500l3-3M1 12v1.500h14V12" fill="none" stroke="currentColor" strokeWidth="1.100" />
                        </Svg>
                        <RedDot />
                    </SideIcon>
                    <SideIcon $h={33}>
                        <Box size={19} strokeWidth={1.3} />
                    </SideIcon>
                    <SideIcon $h={33}>
                        <Settings size={19} strokeWidth={1.3} />
                    </SideIcon>
                    <SideIcon $h={33}>
                        <Lightbulb size={19} strokeWidth={1.3} />
                    </SideIcon>
                    <SideIcon $h={25}>
                        <Ellipsis size={18} strokeWidth={1.8} />
                    </SideIcon>
                </Sidebar>
                <Main>
                    <TabStrip>
                        <TabRun>
                            {tabsLeft.map((icon, i) => (
                                <Slot key={i} $w={32} $sep={i < tabsLeft.length - 1}>
                                    {icon}
                                </Slot>
                            ))}
                        </TabRun>
                        <TabGroup>
                            <Pill $color="#5a2dfa" />
                            <Slot $w={32}>
                                <FaWhatsapp size={17} color="#25d366" />
                            </Slot>
                            <ActiveTab>
                                <Svg>
                                    <circle cx="8" cy="8" r="8" fill="#000" />
                                    <path d="M8 4l4 7H4z" fill="#fff" />
                                </Svg>
                                <TabLabel>Informes</TabLabel>
                            </ActiveTab>
                            <Slot $w={32} $sep>
                                <SheetIcon />
                            </Slot>
                            <Slot $w={32}>
                                <SheetIcon />
                            </Slot>
                        </TabGroup>
                        <TabRun>
                            {tabsMiddle.map((icon, i) => (
                                <Slot key={i} $w={31} $sep={i < tabsMiddle.length - 1}>
                                    {icon}
                                </Slot>
                            ))}
                        </TabRun>
                        <TabGroup $ml={1}>
                            <Pill $color="#e8485f" />
                            <Slot $w={31} $sep>
                                <Svg>
                                    <rect width="16" height="16" rx="2" fill="#000" />
                                    <circle cx="5" cy="8" r="3.500" fill="#fff" />
                                    <ellipse cx="10.500" cy="8" rx="1.800" ry="3.200" fill="#fff" />
                                    <ellipse cx="13.500" cy="8" rx="0.700" ry="3" fill="#fff" />
                                </Svg>
                            </Slot>
                            <Slot $w={31} $sep>
                                <MediumM />
                            </Slot>
                            <Slot $w={31} $sep>
                                <MediumM />
                            </Slot>
                            <Slot $w={31}>
                                <MediumM />
                            </Slot>
                        </TabGroup>
                        <TabRun>
                            <Slot $w={31} $sep>
                                <Svg>
                                    <path d="M0 4h4l1.500 5L7 4h2l1.500 5L12 5h2.500l-3 9h-2L8 9l-1.500 5h-2z" fill="#0a9a6a" />
                                    <text x="13" y="6" fontFamily="Liberation Sans" fontWeight="700" fontSize="6" fill="#0a9a6a">
                                        3
                                    </text>
                                </Svg>
                            </Slot>
                            <Slot $w={31} $sep>
                                <YoutubeIcon />
                            </Slot>
                            <Slot $w={31}>
                                <YoutubeIcon />
                            </Slot>
                            <PlusButton>+</PlusButton>
                        </TabRun>
                        <WindowControls>
                            <WindowButton>
                                <Search size={17} strokeWidth={1.3} />
                            </WindowButton>
                            <WindowButton>
                                <Svg s={14}>
                                    <path d="M1 13.500h14" stroke="currentColor" strokeWidth="1.200" />
                                </Svg>
                            </WindowButton>
                            <WindowButton>
                                <Svg s={13}>
                                    <path d="M1 5h10v10H1zM5 5V1h10v10h-4" fill="none" stroke="currentColor" strokeWidth="1.200" />
                                </Svg>
                            </WindowButton>
                            <WindowButton>
                                <X size={18} strokeWidth={1.2} />
                            </WindowButton>
                        </WindowControls>
                    </TabStrip>
                    <ToolRow>
                        <AddressBar>
                            <NavBtn $w={35}>
                                <ChevronLeft size={18} strokeWidth={1.2} />
                            </NavBtn>
                            <NavBtn $w={38} $muted>
                                <ChevronRight size={18} strokeWidth={1.2} />
                            </NavBtn>
                            <NavBtn $w={24}>
                                <RotateCw size={15} strokeWidth={1.5} />
                            </NavBtn>
                            <VpnBadge>VPN</VpnBadge>
                            <LockWrap>
                                <Svg s={14}>
                                    <rect x="2" y="7" width="12" height="9" rx="1.500" fill="#2f353c" />
                                    <path d="M4.500 7V4.500a3.500 3.500 0 0 1 7 0V7" fill="none" stroke="#2f353c" strokeWidth="1.500" />
                                </Svg>
                            </LockWrap>
                            <Url>
                                dashboard-nmas7lrsyq-ue.a.<span>run.app</span>/informes/factura
                            </Url>
                            <AddressTools>
                                <ToolIcon>
                                    <Svg>
                                        <path d="M8 3H2v11h11V8M6 10l.5-2.500 5-5 2 2-5 5z" fill="none" stroke="currentColor" strokeWidth="1.100" />
                                    </Svg>
                                </ToolIcon>
                                <ToolIcon>
                                    <Camera size={16} strokeWidth={1.3} />
                                </ToolIcon>
                                <ToolIcon>
                                    <ShieldCheck size={16} strokeWidth={1.2} color="#777" />
                                </ToolIcon>
                                <ToolIcon>
                                    <Svg>
                                        <path d="M2 2l12 6-12 6 2.500-6z" fill="none" stroke="currentColor" strokeWidth="1.100" />
                                    </Svg>
                                </ToolIcon>
                                <ToolIcon>
                                    <Heart size={16} strokeWidth={1.3} />
                                </ToolIcon>
                                <ToolIcon>
                                    <Svg>
                                        <path d="M8 2v8M4.500 7L8 10.500 11.500 7M2 11.500v2.500h12v-2.500" fill="none" stroke="currentColor" strokeWidth="1.300" />
                                    </Svg>
                                    <BlueDot />
                                </ToolIcon>
                                <ToolIcon>
                                    <Svg s={14}>
                                        <path d="M1 3h14M1 8h14M1 13h14M10 1.500v3M5 6.500v3M11 11.500v3" fill="none" stroke="currentColor" strokeWidth="1.200" />
                                    </Svg>
                                </ToolIcon>
                                <AvatarTile>
                                    <Svg s={15}>
                                        <circle cx="8" cy="5" r="3.500" fill="none" stroke="currentColor" strokeWidth="1.100" />
                                        <rect x="2.500" y="9.500" width="11" height="5.500" rx="2.700" fill="none" stroke="currentColor" strokeWidth="1.100" />
                                    </Svg>
                                </AvatarTile>
                            </AddressTools>
                        </AddressBar>
                        <ExtensionBar>
                            <ExtSlot>
                                <Svg>
                                    <path d="M8 0q4 1.500 7.500 1.500Q15.500 11 8 16 .5 11 .5 1.500 4 1.500 8 0z" fill="#67b279" />
                                    <path d="M4.500 7.500L7.500 10.500 11.500 5" fill="none" stroke="#fff" strokeWidth="1.600" />
                                </Svg>
                            </ExtSlot>
                            <ExtSlot>
                                <Svg>
                                    <circle cx="8" cy="8" r="8" fill="#f0355c" />
                                    <path d="M3 6.500l10-2v2l-10 2zM3 10l10-2v2l-10 2z" fill="#fff" />
                                </Svg>
                            </ExtSlot>
                            <ExtSlot>
                                <svg width="16" height="16" viewBox="0 0 16 16">
                                    <circle cx="8" cy="8" r="6" fill="none" stroke="#e8485f" strokeWidth="4" strokeDasharray="9.500 28" />
                                    <circle cx="8" cy="8" r="6" fill="none" stroke="#f5c518" strokeWidth="4" strokeDasharray="9.500 28" strokeDashoffset="-9.500" />
                                    <circle cx="8" cy="8" r="6" fill="none" stroke="#3cb34a" strokeWidth="4" strokeDasharray="9.500 28" strokeDashoffset="-19" />
                                    <circle cx="8" cy="8" r="6" fill="none" stroke="#2f8de4" strokeWidth="4" strokeDasharray="9.500 28" strokeDashoffset="-28.500" />
                                    <circle cx="8" cy="8" r="3" fill="#fff" />
                                </svg>
                            </ExtSlot>
                            <ExtSlot>
                                <Svg>
                                    <rect width="16" height="16" fill="#20232a" />
                                    <foreignObject x="1" y="1" width="14" height="14">
                                        <FaReact size={14} color="#61dafb" />
                                    </foreignObject>
                                </Svg>
                            </ExtSlot>
                            <ExtSlot>
                                <Svg>
                                    <rect width="16" height="16" fill="#f5bd2f" />
                                    <path d="M8 1l6 3.500v7L8 15l-6-3.500v-7z" fill="#7d6430" />
                                </Svg>
                            </ExtSlot>
                            <ExtSlot>
                                <Box size={15} strokeWidth={1.3} />
                            </ExtSlot>
                            <ExtPill />
                        </ExtensionBar>
                    </ToolRow>
                    <BookmarkBar>
                        <Bookmark>
                            <MsLogo />
                            Microsoft Certificati...
                        </Bookmark>
                        <Bookmark>
                            <MsLogo />
                            Microsoft Rewards
                        </Bookmark>
                        <Bookmark>
                            <TinkerLogo />
                            Dashboard | Tinkerc...
                        </Bookmark>
                        <Bookmark>
                            <MsLogo />
                            Microsoft Start
                        </Bookmark>
                    </BookmarkBar>
                    <PagePanel>
                        <Page>
                            <Header>
                                <LogoWrap>
                                    <PlanLogo />
                                </LogoWrap>
                                <HeaderTitle>Soluciones Plan B</HeaderTitle>
                                <HeaderUser>Bienvenido pepe</HeaderUser>
                                <svg width="30" height="30" viewBox="0 0 30 30">
                                    <path d="M8 5.500a12 12 0 1 0 14 0M15 0v15" fill="none" stroke="#fff" strokeWidth="1.800" />
                                </svg>
                            </Header>
                            <NavBar>
                                <NavItem>Tarjetas</NavItem>
                                <NavItem>Tarjetas</NavItem>
                                <NavItem>Ticket</NavItem>
                                <NavItem>Ticket exonerados</NavItem>
                                <NavItem>Caja</NavItem>
                                <NavItemActive>Factura</NavItemActive>
                            </NavBar>
                            <Controls>
                                <Field>
                                    Desde:
                                    <DateBox>
                                        02/11/2023
                                        <CalendarIcon />
                                    </DateBox>
                                </Field>
                                <Field>
                                    Hasta:
                                    <DateBox>
                                        22/02/2024
                                        <CalendarIcon />
                                    </DateBox>
                                </Field>
                                <ActionButtons>
                                    <ActionButton $w={60}>
                                        <svg width="50" height="50" viewBox="0 0 50 50">
                                            <circle cx="21" cy="21" r="17" fill="none" stroke="#fff" strokeWidth="3" />
                                            <path d="M33 33l14 13" stroke="#fff" strokeWidth="4" strokeLinecap="round" />
                                        </svg>
                                    </ActionButton>
                                    <ActionButton $w={55}>
                                        <svg width="44" height="30" viewBox="0 0 44 30">
                                            <text x="22" y="24" textAnchor="middle" fontFamily="Liberation Sans" fontWeight="700" fontStyle="italic" fontSize="27" fill="#fff" stroke="#fff" strokeWidth="0.700" letterSpacing="-1">
                                                SRi
                                            </text>
                                        </svg>
                                    </ActionButton>
                                    <ActionButton $w={55}>
                                        <ExcelGlyph />
                                    </ActionButton>
                                    <ActionButton $w={55}>
                                        <PdfGlyph />
                                    </ActionButton>
                                </ActionButtons>
                                <ClockWrap>
                                    <SegmentClock />
                                </ClockWrap>
                            </Controls>
                            <DataPanel>
                                <TableClip>
                                    <Table>
                                        <colgroup>
                                            {columnWidths.map((w, i) => (
                                                <col key={i} width={w} />
                                            ))}
                                        </colgroup>
                                        <tbody>
                                            {invoices.map((row) => (
                                                <tr key={row[0]}>
                                                    <Cell>{row[0]}</Cell>
                                                    <Cell>001-100-000000{row[1]}</Cell>
                                                    <Cell>{row[2]}</Cell>
                                                    <Cell>{row[3]}</Cell>
                                                    <Cell>{row[4]}</Cell>
                                                    <Cell>{row[5]}</Cell>
                                                    <Cell>{row[6]}</Cell>
                                                    <Cell>{row[7]}</Cell>
                                                </tr>
                                            ))}
                                        </tbody>
                                    </Table>
                                </TableClip>
                                <TableScroll>
                                    <ChevronUp size={10} strokeWidth={3} />
                                    <TableThumb />
                                </TableScroll>
                                <Totals>
                                    <div>Total:</div>
                                    <TotalValue>$ 814.50</TotalValue>
                                    <div>Subtotal:</div>
                                    <TotalValue>$ 716.76</TotalValue>
                                    <div>Iva:</div>
                                    <TotalValue>$ 97.74</TotalValue>
                                </Totals>
                            </DataPanel>
                        </Page>
                        <PageScroll>
                            <ChevronUp size={10} strokeWidth={3} color="#aaa" />
                            <PageThumb />
                            <ChevronDown size={10} strokeWidth={3} />
                        </PageScroll>
                    </PagePanel>
                </Main>
            </Upper>
            <Taskbar>
                <Weather>
                    <Svg s={26}>
                        <circle cx="8" cy="9" r="6" fill="#f79a1f" />
                        <ellipse cx="5" cy="5" rx="4" ry="2.500" fill="#b9cfe8" />
                        <ellipse cx="11" cy="12" rx="4" ry="2.500" fill="#cfdff0" />
                    </Svg>
                    <WeatherBadge>1</WeatherBadge>
                </Weather>
                {taskIcons.map((t, i) => (
                    <TaskSlot key={i} $dot={t.dot} $active={t.active}>
                        {t.icon}
                    </TaskSlot>
                ))}
                <TaskDivider $gap={2} />
                <TaskSlot>
                    <Svg s={25}>
                        <rect x="1" y="1" width="14" height="14" rx="1" fill="#fff" />
                        <path d="M8 2.500l4.500 2.500v6L8 14l-4.500-3V5z" fill="#17344f" />
                        <path d="M6.500 6.500L9 8l-2.500 1.500" fill="none" stroke="#fff" strokeWidth="0.900" />
                    </Svg>
                </TaskSlot>
                <TaskSlot>
                    <Ellipsis size={18} strokeWidth={2.4} />
                </TaskSlot>
                <TaskDivider $gap={1} />
                <Tray>
                    <TrayItem $w={24} $ml={0}>
                        <ChevronUp size={16} strokeWidth={1.6} />
                    </TrayItem>
                    <TrayItem $w={36} $ml={8}>
                        ESP
                    </TrayItem>
                    <TrayItem $w={20} $ml={8}>
                        <Svg s={18}>
                            <path d="M1 2h9v9H1zM3 14h6M6 11v3M11 1h3v10h-3" fill="none" stroke="#fff" strokeWidth="0.900" />
                        </Svg>
                    </TrayItem>
                    <TrayItem $w={20} $ml={6}>
                        <Volume1 size={16} strokeWidth={1.2} />
                    </TrayItem>
                    <ClockText>
                        12:11 PM
                        <br />
                        2/22/2024
                    </ClockText>
                    <TrayItem $w={20} $ml={4}>
                        <Svg s={18}>
                            <path d="M8 1q4 0 4 5v4l2 2.500H2L4 10V6q0-5 4-5zM6.500 13.500h3L8 15.500z" fill="#f9a66c" />
                        </Svg>
                    </TrayItem>
                    <TrayItem $w={28} $ml={12}>
                        <Svg s={26}>
                            <path d="M5 1h6l-2 10H2z" fill="#2fb0e8" />
                            <path d="M9 1h3q3 0 3 3l-1 7H7z" fill="#c85fd6" />
                            <rect x="5" y="10" width="10" height="5.500" rx="1" fill="#f4cf2a" />
                            <text x="10" y="14.200" textAnchor="middle" fontFamily="Liberation Sans" fontWeight="700" fontSize="4" fill="#222">
                                PRE
                            </text>
                        </Svg>
                    </TrayItem>
                </Tray>
            </Taskbar>
        </Screen>
    )
}
